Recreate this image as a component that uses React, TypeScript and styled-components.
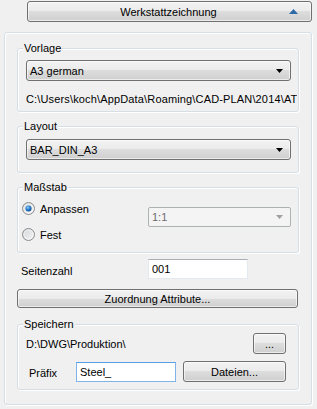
import React from "react";
import styled, { createGlobalStyle } from "styled-components";

const GlobalStyle = createGlobalStyle`
  html, body {
    margin: 0;
    padding: 0;
    background: #f0f0f0;
  }
  body {
    width: 317px;
    height: 409px;
    overflow: hidden;
    font-family: "Liberation Sans", Arial, sans-serif;
    font-size: 11px;
    color: #000;
  }
`;

const Page = styled.div`
  display: flex;
  flex-direction: column;
  padding-top: 1px;
`;

const winButton = `
  box-sizing: border-box;
  border: 1px solid #707070;
  border-radius: 3px;
  background: linear-gradient(#f2f2f2 0%, #ebebeb 50%, #dddddd 50%, #cfcfcf 100%);
  box-shadow: inset 0 0 0 1px rgba(255, 255, 255, 0.6);
  font-family: "Liberation Sans", Arial, sans-serif;
  font-size: 11px;
  color: #000;
  padding: 0;
  display: flex;
  align-items: center;
`;

const HeaderButton = styled.div`
  ${winButton}
  margin-left: 27px;
  width: 285px;
  height: 21px;
`;

const HeaderText = styled.span`
  flex: 1;
  text-align: center;
  padding-left: 20px;
`;

const UpArrow = styled.svg`
  margin-right: 13px;
`;

const Panel = styled.div`
  box-sizing: border-box;
  margin: 10px 0 0 4px;
  width: 308px;
  height: 373px;
  border: 1px solid #d5dfe5;
  border-radius: 3px;
  box-shadow: inset 1px 1px 0 #fff, 1px 1px 0 #fff;
  padding: 15px 12px 0 12px;
  display: flex;
  flex-direction: column;
`;

const GroupBox = styled.div<{ $gap?: number; $bottom: number }>`
  box-sizing: border-box;
  width: 282px;
  margin-top: ${(p) => p.$gap ?? 0}px;
  border: 1px solid #d5dfe5;
  border-radius: 3px;
  box-shadow: inset 1px 1px 0 #fff, 1px 1px 0 #fff;
  padding: 0 7px ${(p) => p.$bottom}px 8px;
  display: flex;
  flex-direction: column;
`;

const Caption = styled.span`
  align-self: flex-start;
  margin: -7px 0 0 -3px;
  padding: 0 1px;
  line-height: 13px;
  background: #f0f0f0;
`;

const Combo = styled.div<{ $top: number }>`
  ${winButton}
  margin-top: ${(p) => p.$top}px;
  height: 21px;
  padding: 0 7px 0 3px;
  justify-content: space-between;
`;

const DisabledCombo = styled.div`
  box-sizing: border-box;
  width: 143px;
  height: 20px;
  margin-top: 7px;
  border: 1px solid #adb2b5;
  border-radius: 2px;
  background: #f4f4f4;
  color: #6d6d6d;
  padding: 0 7px 0 3px;
  display: flex;
  align-items: center;
  justify-content: space-between;
`;

const PathText = styled.div`
  margin: 12px -6px 0 0;
  line-height: 13px;
  letter-spacing: 0.15px;
  white-space: nowrap;
  overflow: hidden;
`;

const ScaleRow = styled.div`
  display: flex;
  margin-top: 6px;
`;

const RadioColumn = styled.div`
  width: 126px;
  margin-left: -4px;
  display: flex;
  flex-direction: column;
  gap: 9px;
`;

const RadioLabel = styled.label`
  display: flex;
  align-items: center;
  height: 17px;
  gap: 5px;
`;

const FieldRow = styled.div<{ $top: number; $indent: number }>`
  display: flex;
  align-items: center;
  margin-top: ${(p) => p.$top}px;
  padding-left: ${(p) => p.$indent}px;
`;

const Label = styled.span<{ $width: number; $indent?: number; $drop?: number }>`
  box-sizing: border-box;
  width: ${(p) => p.$width}px;
  flex-shrink: 0;
  padding-left: ${(p) => p.$indent ?? 0}px;
  padding-top: ${(p) => p.$drop ?? 4}px;
`;

const TextBox = styled.div<{ $focused?: boolean }>`
  box-sizing: border-box;
  width: 100px;
  height: 20px;
  background: #fff;
  border: 1px solid ${(p) => (p.$focused ? "#7eb4ea" : "#e3e9ef")};
  border-top-color: ${(p) => (p.$focused ? "#569de5" : "#abadb3")};
  padding: 0 3px;
  display: flex;
  align-items: center;
`;

const WideButton = styled.div`
  ${winButton}
  margin-top: 10px;
  width: 281px;
  height: 19px;
  justify-content: center;
`;

const SmallButton = styled.div<{ $width: number; $left?: number }>`
  ${winButton}
  width: ${(p) => p.$width}px;
  margin-left: ${(p) => p.$left ?? 0}px;
  height: 21px;
  justify-content: center;
`;

const SaveRow = styled.div<{ $top: number }>`
  display: flex;
  align-items: center;
  margin-top: ${(p) => p.$top}px;
  padding-right: 5px;
`;

const Grow = styled.span`
  flex: 1;
`;

const DownArrow = ({ color = "#000" }: { color?: string }) => (
  <svg width="7" height="4" viewBox="0 0 7 4">
    <path d="M0 0H7L3.5 4Z" fill={color} />
  </svg>
);

const Radio = ({ checked }: { checked?: boolean }) => (
  <svg width="13" height="13" viewBox="0 0 13 13">
    <defs>
      <linearGradient id={checked ? "rOn" : "rOff"} x1="0" y1="0" x2="1" y2="1">
        <stop offset="0" stopColor="#d2d4d6" />
        <stop offset="1" stopColor="#f6f6f6" />
      </linearGradient>
      <radialGradient id="dot" cx="0.4" cy="0.35" r="0.7">
        <stop offset="0" stopColor="#8ad0ff" />
        <stop offset="0.6" stopColor="#1a6fc0" />
        <stop offset="1" stopColor="#0b4f92" />
      </radialGradient>
    </defs>
    <circle cx="6.5" cy="6.5" r="6" fill={`url(#${checked ? "rOn" : "rOff"})`} stroke="#8a8c8e" />
    <circle cx="6.5" cy="6.5" r="4.5" fill="none" stroke="#fff" strokeOpacity="0.5" />
    {checked && <circle cx="6.5" cy="6.5" r="3" fill="url(#dot)" />}
  </svg>
);

export default function App() {
  return (
    <>
      <GlobalStyle />
      <Page>
        <HeaderButton>
          <HeaderText>Werkstattzeichnung</HeaderText>
          <UpArrow width="9" height="5" viewBox="0 0 9 5">
            <path d="M0 5H9L4.5 0Z" fill="#2f6aa8" />
          </UpArrow>
        </HeaderButton>

        <Panel>
          <GroupBox $bottom={5}>
            <Caption>Vorlage</Caption>
            <Combo $top={5}>
              <span>A3 german</span>
              <DownArrow />
            </Combo>
            <PathText>C:\Users\koch\AppData\Roaming\CAD-PLAN\2014\AT</PathText>
          </GroupBox>

          <GroupBox $gap={14} $bottom={12}>
            <Caption>Layout</Caption>
            <Combo $top={6}>
              <span>BAR_DIN_A3</span>
              <DownArrow />
            </Combo>
          </GroupBox>

          <GroupBox $gap={14} $bottom={9}>
            <Caption>Maßstab</Caption>
            <ScaleRow>
              <RadioColumn>
                <RadioLabel>
                  <Radio checked />
                  Anpassen
                </RadioLabel>
                <RadioLabel>
                  <Radio />
                  Fest
                </RadioLabel>
              </RadioColumn>
              <DisabledCombo>
                <span>1:1</span>
                <DownArrow color="#a0a0a0" />
              </DisabledCombo>
            </ScaleRow>
          </GroupBox>

          <FieldRow $top={6} $indent={4}>
            <Label $width={127}>Seitenzahl</Label>
            <TextBox>001</TextBox>
          </FieldRow>

          <WideButton>Zuordnung Attribute...</WideButton>

          <GroupBox $gap={16} $bottom={7}>
            <Caption>Speichern</Caption>
            <SaveRow $top={2}>
              <Grow>D:\DWG\Produktion\</Grow>
              <SmallButton $width={33}>...</SmallButton>
            </SaveRow>
            <SaveRow $top={7}>
              <Label $width={50} $indent={3} $drop={2}>
                Präfix
              </Label>
              <TextBox $focused>Steel_</TextBox>
              <SmallButton $width={103} $left={7}>
                Dateien...
              </SmallButton>
            </SaveRow>
          </GroupBox>
        </Panel>
      </Page>
    </>
  );
}
